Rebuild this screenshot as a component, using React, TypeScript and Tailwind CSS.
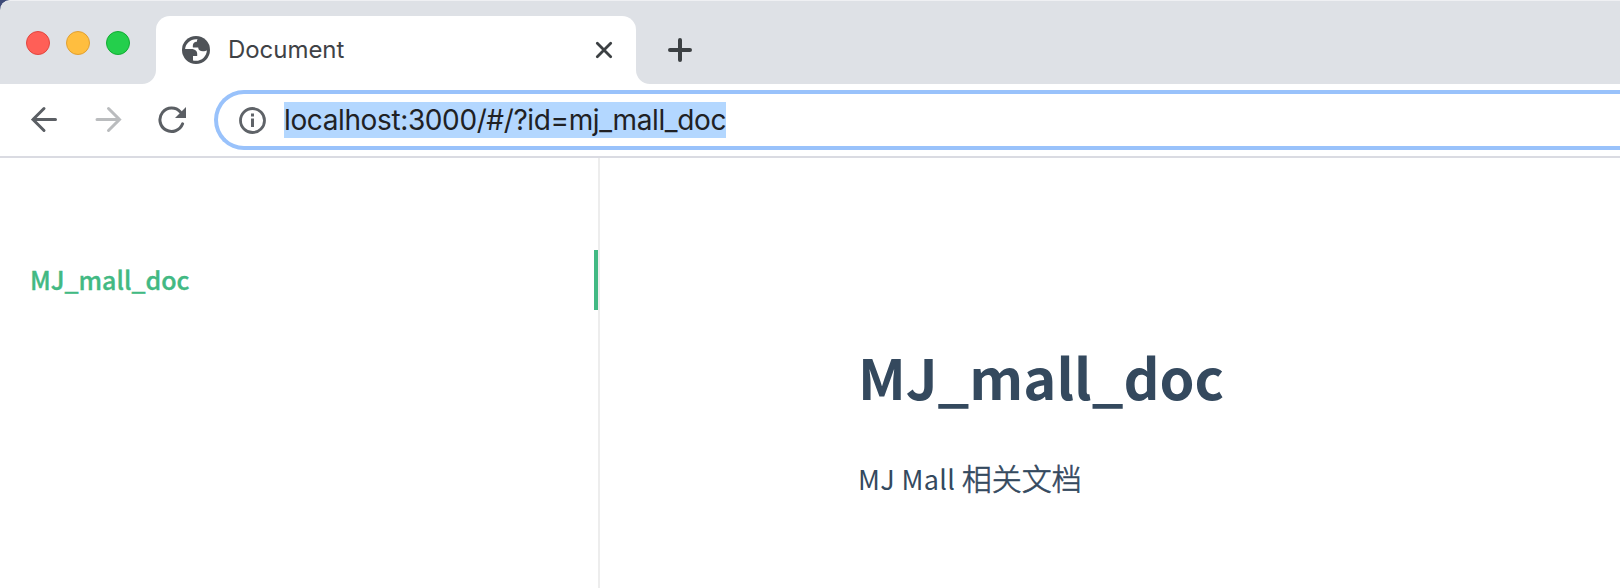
function Globe() {
  return (
    <svg className="size-[34px] shrink-0" viewBox="0 0 34 34">
      <circle cx="17" cy="17" r="14" fill="#4f5358" />
      <path
        d="M17.5 6.2C11.4 6 6.5 10.7 6.1 16H12C16.6 16 18.7 18.3 18.2 22.4V23H14V27.4C20.6 29.3 27.6 24.5 27.9 17.2C27 18 25.6 18.3 24 18.3C21 18.3 19.2 17.2 19.2 14.6H13.9C13.5 10.8 14.9 8.7 17.9 8.7C17.9 7.6 18.1 6.8 18.6 6.2Z"
        fill="#fff"
      />
    </svg>
  );
}

function Tab() {
  return (
    <div className="relative mt-4 flex h-[68px] w-[480px] rounded-t-[14px] bg-white">
      <svg className="absolute -left-[14px] bottom-0 size-[14px]" viewBox="0 0 14 14">
        <path d="M14 0A14 14 0 0 1 0 14H14Z" fill="#fff" />
      </svg>
      <svg className="absolute -right-[14px] bottom-0 size-[14px]" viewBox="0 0 14 14">
        <path d="M0 0A14 14 0 0 0 14 14H0Z" fill="#fff" />
      </svg>
      <div className="flex h-[68px] w-full items-center pl-[23px] pr-[16px]">
        <Globe />
        <span className="ml-[15px] flex-1 text-[24px] leading-[30px] tracking-[-0.05px] text-[#3f4246]">Document</span>
        <svg className="size-[32px]" viewBox="0 0 32 32" stroke="#3c4043" strokeWidth="2.8" strokeLinecap="round">
          <path d="M9.3 9.3L22.7 22.7M22.7 9.3L9.3 22.7" />
        </svg>
      </div>
    </div>
  );
}

function TitleBar() {
  return (
    <div className="flex h-[84px] rounded-tl-[10px] border-t border-[#eff0f3] bg-[#dee1e6]">
      <div className="-mt-px flex w-[156px] shrink-0 gap-4 pl-[26px] pt-[31px]">
        <i className="size-6 rounded-full border border-[#e2463f] bg-[#ff5f57]" />
        <i className="size-6 rounded-full border border-[#e1a032] bg-[#ffbe3f]" />
        <i className="size-6 rounded-full border border-[#12ac33] bg-[#24cf4c]" />
      </div>
      <div className="-mt-px flex">
        <Tab />
        <svg className="ml-[32px] mt-[38px] size-[24px]" viewBox="0 0 24 24" stroke="#3c4043" strokeWidth="4" strokeLinecap="round">
          <path d="M2 12H22M12 2V22" />
        </svg>
      </div>
    </div>
  );
}

function Toolbar() {
  return (
    <div className="flex h-[74px] border-b-2 border-[#dadbe2] bg-white">
      <div className="flex w-[214px] shrink-0 items-center pl-[30px]">
        <svg className="size-[28px]" viewBox="0 0 28 28" fill="none" stroke="#5b5f64" strokeWidth="3" strokeLinecap="round" strokeLinejoin="miter">
          <path d="M25.5 13.5H3M14 2.5L3 13.5L14 24.5" />
        </svg>
        <svg className="ml-[36px] size-[28px]" viewBox="0 0 28 28" fill="none" stroke="#babcbe" strokeWidth="3" strokeLinecap="round">
          <path d="M3 13.5H25.5M14.5 2.5L25.5 13.5L14.5 24.5" />
        </svg>
        <svg className="ml-[36px] size-[30px]" viewBox="0 0 30 30" fill="none">
          <path d="M24.6 18.8A11.7 11.7 0 1 1 22.4 7" stroke="#5b5f64" strokeWidth="3" strokeLinecap="round" />
          <path d="M28 2V13H17Z" fill="#5b5f64" />
        </svg>
      </div>
      <div className="mt-[6px] flex h-[60px] flex-1 items-center rounded-l-full border-y-4 border-l-4 border-[#99c2fb]">
        <svg className="ml-[20px] size-[28px] shrink-0" viewBox="0 0 28 28" fill="none">
          <circle cx="14.5" cy="14.5" r="12" stroke="#5f6368" strokeWidth="2.8" />
          <path d="M14.5 12.5V21M14.5 7.5V10.5" stroke="#5f6368" strokeWidth="3" />
        </svg>
        <span className="ml-[18px] h-9 w-[442px] whitespace-nowrap bg-[#b3d7ff] text-[28px] leading-9 tracking-[-0.38px] text-[#202124]">
          localhost:3000/#/?id=mj_mall_doc
        </span>
      </div>
    </div>
  );
}

function Sidebar() {
  return (
    <aside className="w-[600px] shrink-0 border-r-2 border-[#ededed] pt-[92px]">
      <a className="block h-[60px] border-r-4 border-[#42b983] pl-[30px] font-['Noto_Sans_CJK_SC',sans-serif] text-[25px] font-medium leading-[58px] text-[#42b983] [-webkit-text-stroke:0.35px_#42b983]">
        MJ_mall_doc
      </a>
    </aside>
  );
}

export default function App() {
  return (
    <div className="flex h-[588px] w-[1620px] flex-col overflow-hidden bg-white font-['Inter',sans-serif]">
      <div className="bg-[#3d4a78]">
        <TitleBar />
      </div>
      <Toolbar />
      <div className="flex flex-1">
        <Sidebar />
        <main className="flex-1 pl-[258px] pt-[178px] font-['Noto_Sans_CJK_SC',sans-serif] text-[#34495e]">
          <h1 className="text-[56px] font-bold leading-[80px]">MJ_mall_doc</h1>
          <p className="mt-[31px] text-[27px] leading-[60px] tracking-[0.35px]">
            MJ Mall <span className="text-[30px] font-light tracking-[0px] [-webkit-text-stroke:0.6px_#34495e]">相关文档</span>
          </p>
        </main>
      </div>
    </div>
  );
}
